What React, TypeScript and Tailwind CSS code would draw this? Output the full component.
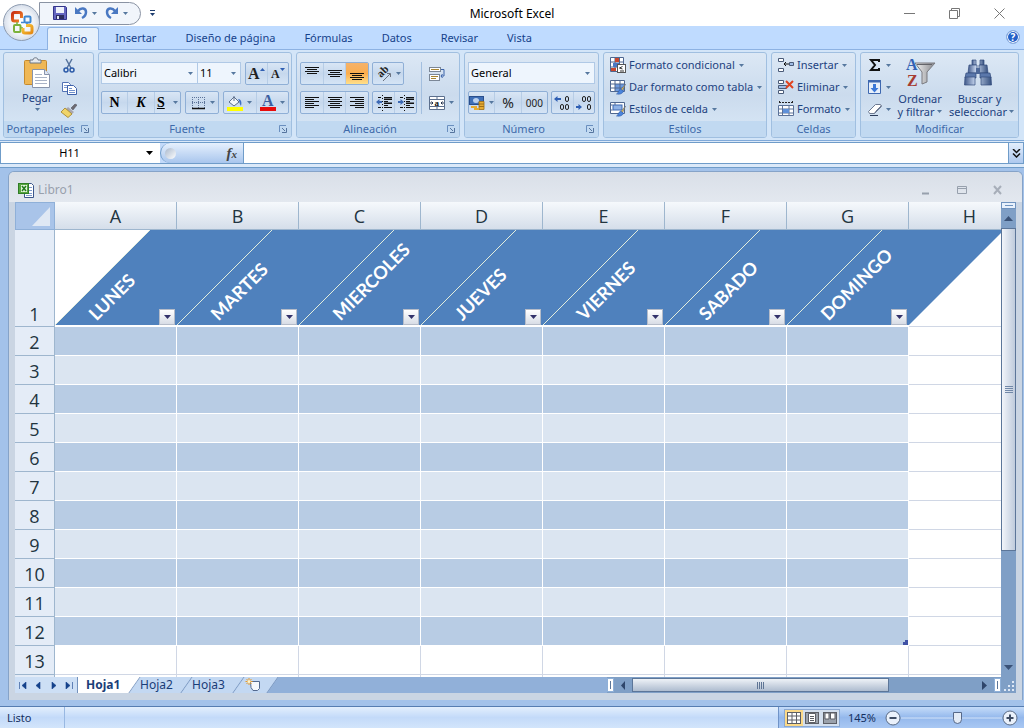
import React, { useState } from 'react';
import clsx from 'clsx';

const DAYS = ['LUNES', 'MARTES', 'MIERCOLES', 'JUEVES', 'VIERNES', 'SABADO', 'DOMINGO'];
const COLUMNS = ['A', 'B', 'C', 'D', 'E', 'F', 'G', 'H'];
const ROWS = [2, 3, 4, 5, 6, 7, 8, 9, 10, 11, 12, 13];
const TABS = ['Inicio', 'Insertar', 'Diseño de página', 'Fórmulas', 'Datos', 'Revisar', 'Vista'];

const Caret = ({ className = 'text-[#56789f]' }: { className?: string }) => (
  <svg className={clsx('shrink-0', className)} width="5" height="3" viewBox="0 0 5 3" fill="currentColor" aria-hidden>
    <path d="M0 0h5L2.500 3z" />
  </svg>
);

interface IconProps {
  children: React.ReactNode;
  size?: number;
}

const Icon = ({ children, size = 16 }: IconProps) => (
  <svg className="shrink-0" width={size} height={size} viewBox={`0 0 ${size} ${size}`} fill="none" aria-hidden>
    {children}
  </svg>
);

/* ---------- icons ---------- */

const OfficeLogo = () => (
  <svg width="24" height="26" viewBox="0 0 24 26" fill="none" aria-hidden>
    <defs>
      <linearGradient id="red" x2="1" y2="1">
        <stop stopColor="#c92f12" />
        <stop offset="1" stopColor="#f28a2b" />
      </linearGradient>
      <linearGradient id="gold" x2="1" y2="1">
        <stop stopColor="#f7c93c" />
        <stop offset="1" stopColor="#e58a13" />
      </linearGradient>
    </defs>
    <path d="M9 11H4.500Q2.500 11 2.500 9V4.500Q2.500 2.500 4.500 2.500H9.500Q11.500 2.500 11.500 4.500V8" stroke="url(#red)" strokeWidth="3" />
    <rect x="14.500" y="6.500" width="6" height="6" rx="1" stroke="#3f87d0" strokeWidth="2" />
    <path d="M11 12.500h3M17 13v3" stroke="#3f87d0" strokeWidth="1.500" />
    <rect x="4" y="15" width="6.500" height="7" rx="1" stroke="#7bb23c" strokeWidth="2" />
    <path d="M7 12v3M10 18h3" stroke="#7bb23c" strokeWidth="1.500" />
    <path d="M16 15.500h4q2 0 2 2V21q0 2-2 2h-5q-2 0-2-2v-3" stroke="url(#gold)" strokeWidth="3" />
  </svg>
);

const SaveIcon = () => (
  <Icon>
    <path d="M1.500 1.500h12l1 1v12h-13z" fill="#6465c0" stroke="#34358a" />
    <rect x="4" y="2" width="8" height="6" fill="#eef1fb" />
    <rect x="4" y="10" width="8" height="4" fill="#2c2c5e" />
    <rect x="5" y="11" width="2" height="3" fill="#dfe3f3" />
  </Icon>
);

const UndoIcon = ({ flip = false }: { flip?: boolean }) => (
  <svg width="14" height="14" viewBox="0 0 14 14" fill="none" className={clsx(flip && '-scale-x-100')} aria-hidden>
    <path d="M4 5c3-4 8-3 8 1 0 3-2 5-4 6" stroke="#4a78c2" strokeWidth="2.500" />
    <path d="M1 1v7h7z" fill="#4a78c2" />
  </svg>
);

const PasteIcon = () => (
  <svg width="28" height="32" viewBox="0 0 28 32" fill="none" aria-hidden>
    <rect x="1.500" y="3.500" width="22" height="24" rx="1" fill="#efb755" stroke="#c58a2e" />
    <path d="M7 6V3h3c0-3 5-3 5 0h3v3z" fill="#e6e9ee" stroke="#6c7785" />
    <path d="M9.500 12.500h12l5 5v13h-17z" fill="#fff" stroke="#8793ab" />
    <path d="M21.500 12.500v5h5" fill="#dfe6f2" stroke="#8793ab" />
    <path d="M12 17.500h7M12 20.500h12M12 23.500h12M12 26.500h12" stroke="#a9b3c6" />
  </svg>
);

const CutIcon = () => (
  <Icon>
    <path d="M5 1l5 9M11 1L6 10" stroke="#56739d" strokeWidth="1.500" />
    <circle cx="5" cy="12" r="2" stroke="#2b5aa8" strokeWidth="1.500" />
    <circle cx="11" cy="12" r="2" stroke="#2b5aa8" strokeWidth="1.500" />
  </Icon>
);

const CopyIcon = () => (
  <Icon>
    <path d="M1.500 2.500h6l2 2v7h-8z" fill="#fff" stroke="#5272b4" />
    <path d="M3 5.500h4M3 7.500h4" stroke="#7f9bd0" />
    <path d="M6.500 5.500h6l3 3v6h-9z" fill="#fff" stroke="#3f62ab" />
    <path d="M8 8.500h3M8 10.500h6M8 12.500h6" stroke="#6f8fcb" />
  </Icon>
);

const BrushIcon = () => (
  <Icon>
    <path d="M10 6l4-4 2 1-4 5z" fill="#6d6a72" stroke="#4b4850" strokeWidth=".5" />
    <path d="M7 5l6 5-2 2-6-5z" fill="#a9a7b0" />
    <path d="M4 6l7 6-4 3.500L0 10z" fill="#f0d469" stroke="#a07f25" strokeWidth=".8" />
  </Icon>
);

const BorderIcon = () => (
  <Icon>
    <path d="M2.500 2v11M8.500 2v11M14.500 2v11M2 2.500h13M2 7.500h13" stroke="#5c7398" strokeDasharray="1 1" />
    <path d="M2 13.500h13" stroke="#111" strokeWidth="1.500" />
  </Icon>
);

const FillIcon = () => (
  <Icon>
    <path d="M2 7l5-5 5 5-5 4z" fill="#f3f7fd" stroke="#5d6f8c" />
    <path d="M7 6V1" stroke="#5d6f8c" />
    <path d="M11 4c3 0 4 3 3 7-2-2-1-5-3-7z" fill="#3d6fc4" />
    <rect y="12" width="16" height="4" fill="#ffff00" />
  </Icon>
);

const LINE_SETS = {
  top: 'M1 1.500h14M3 3.500h10M1 5.500h14M3 7.500h10',
  middle: 'M1 4.500h14M3 6.500h10M1 8.500h14M3 10.500h10',
  bottom: 'M1 7.500h14M3 9.500h10M1 11.500h14M3 13.500h10',
  left: 'M1 2.500h14M1 4.500h9M1 6.500h14M1 8.500h9M1 10.500h14M1 12.500h9',
  center: 'M1 2.500h14M3 4.500h10M1 6.500h14M3 8.500h10M1 10.500h14M3 12.500h10',
  right: 'M1 2.500h14M6 4.500h9M1 6.500h14M6 8.500h9M1 10.500h14M6 12.500h9',
};

const LinesIcon = ({ kind }: { kind: keyof typeof LINE_SETS }) => (
  <Icon>
    <path d={LINE_SETS[kind]} stroke="#111" />
  </Icon>
);

const IndentIcon = ({ out = false }: { out?: boolean }) => (
  <Icon>
    <path d="M2 2.500h3M8 2.500h8M8 4.500h8M8 6.500h4M8 8.500h8M8 10.500h4M2 12.500h3M8 12.500h8" stroke="#111" />
    <path d="M8 4h8M8 8h8" stroke="#111" />
    <path d="M6.500 0v16" stroke="#111" strokeDasharray="1 2" />
    <path d={out ? 'M0 7l3.500-3v2H6v2H3.500v2z' : 'M6 7L2.500 4v2H0v2h2.500v2z'} fill="#3c69b5" />
  </Icon>
);

const OrientationIcon = () => (
  <Icon>
    <text transform="translate(5 12) rotate(-45)" fontFamily="Liberation Serif, serif" fontWeight="700" fontSize="11" fill="#222">ab</text>
    <path d="M7 15l7-7M11 7.500h3.500V11" stroke="#6b7280" />
  </Icon>
);

const WrapIcon = () => (
  <Icon>
    <rect x="0.500" y="1.500" width="11" height="4" fill="#fff" stroke="#7b8797" />
    <path d="M2 3.500h8" stroke="#a88632" />
    <rect x="0.500" y="8.500" width="10" height="6" fill="#fff" stroke="#7b8797" />
    <path d="M2 10.500h7M2 12.500h5" stroke="#a88632" />
    <path d="M12 3.500h3V10h-3m1.500-2L12 10l1.500 2" stroke="#3b62a8" />
  </Icon>
);

const MergeIcon = () => (
  <Icon>
    <path d="M.5 1.500h15v13H.5zM.5 4.500h15M.5 11.500h15M8 1.500v3M8 11.500v3" fill="#fff" stroke="#5b6f8d" />
    <path d="M1 8h3M2.500 6.500L4 8 2.500 9.500M15 8h-3M13.500 6.500L12 8l1.500 1.500" stroke="#24334d" />
    <text x="5.500" y="10.500" fontFamily="Liberation Serif, serif" fontWeight="700" fontSize="9" fill="#111">a</text>
  </Icon>
);

const MoneyIcon = () => (
  <Icon>
    <rect x=".5" y="1.500" width="14" height="8" fill="#3f6fb7" stroke="#2a4f8d" />
    <ellipse cx="7" cy="5.500" rx="3" ry="2.500" fill="#b9d0ef" />
    <path d="M10 6.500h5v8h-5z" fill="#e7ac34" stroke="#a06f14" strokeWidth=".8" />
    <path d="M10 9h5M10 11.500h5" stroke="#a06f14" />
    <path d="M2 12h6M5 14h5" stroke="#e7ac34" strokeWidth="2" />
  </Icon>
);

const DecimalIcon = ({ more = false }: { more?: boolean }) => (
  <Icon>
    {more ? <path d="M0 4l3.500-3v2H7v2H3.500v2z" fill="#2f5fb3" /> : <path d="M6 12L2.500 9v2H0v2h2.500v2z" fill="#2f5fb3" />}
    <rect x="11.500" y="1.500" width="3" height="5" rx="1.500" stroke="#222" />
    <rect x="11.500" y="9.500" width="3" height="5" rx="1.500" stroke="#222" />
    {more ? <rect x="6.500" y="9.500" width="3" height="5" rx="1.500" stroke="#222" /> : <rect x="6.500" y="1.500" width="3" height="5" rx="1.500" stroke="#222" />}
  </Icon>
);

const ConditionalIcon = () => (
  <Icon>
    <path d="M.5.5h13v14H.5zM.5 5h13M.5 10h13M5 .5v14M9.500.5v14" fill="#fff" stroke="#4f6790" />
    <rect x="5" y="1" width="4" height="4" fill="#c8472f" />
    <rect x="3" y="6" width="6" height="4" fill="#4b78c4" />
    <rect x="1" y="11" width="5" height="3" fill="#c8472f" />
    <rect x="7.500" y="7.500" width="8" height="8" fill="#fff" stroke="#555" />
    <path d="M12.500 9.500l-3 1.500 3 1M10 14h4" stroke="#333" />
  </Icon>
);

const TableStyleIcon = ({ cell = false }: { cell?: boolean }) => (
  <Icon>
    <path d="M.5 1.500h14v11H.5z" fill="#fff" stroke="#4f6790" />
    {cell ? <rect x="3" y="4" width="9" height="5" fill="#8fb2e6" stroke="#3e68b0" /> : <path d="M5 5h9v7H5z" fill="#6e9ade" />}
    <path d={cell ? 'M.5 4h2M.5 9h2M5 1.500V4' : 'M.5 5h14M.5 9h14M5 1.500v11M10 1.500v11'} stroke="#4f6790" />
    <path d="M15.500 5l-5 6 2 1z" fill="#e9bd4a" stroke="#5e6a80" strokeWidth=".6" />
    <path d="M10.500 10l3 2c-1 3-4 3.500-7 3 2-1 2-4 4-5z" fill="#4b84dc" stroke="#2d5ba8" strokeWidth=".6" />
  </Icon>
);

const CellsIcon = ({ remove = false }: { remove?: boolean }) => (
  <Icon>
    <path d="M.5 1.500h5v3h-5zM.5 11.500h5v3h-5z" fill="#fff" stroke="#4a5b78" />
    {remove ? (
      <>
        <path d="M.5 6.500h8v3h-8z" fill="#9fbce6" stroke="#4a5b78" />
        <path d="M8 2l7 7M15 2L8 9" stroke="#e0431f" strokeWidth="2" />
      </>
    ) : (
      <>
        <path d="M11.500 5.500h4v3h-4z" fill="#9fbce6" stroke="#4a5b78" />
        <path d="M6 7h5M8 5L6 7l2 2" stroke="#111" />
      </>
    )}
  </Icon>
);

const FormatIcon = () => (
  <Icon>
    <path d="M1 1.500h13M1.500 0v3M14.500 0v3" stroke="#222" strokeDasharray="2 1" />
    <path d="M.5 4.500h15v10H.5zM.5 8h15M.5 12h15M4.500 4.500v10M11 4.500v10" fill="#fff" stroke="#5b7299" />
    <rect x="5" y="8" width="6" height="4" fill="#5f91da" />
  </Icon>
);

const FillDownIcon = () => (
  <Icon>
    <path d="M1.500 1.500h12v13h-12z" fill="#e8f0fb" stroke="#3e68b0" />
    <path d="M1 1h13v2.500H1z" fill="#3e68b0" />
    <path d="M6 5h3v4h2.500l-4 4.500-4-4.500H6z" fill="#3b78d8" />
  </Icon>
);

const EraserIcon = () => (
  <Icon>
    <path d="M1.500 10.500l7-7h5l1 2-7 7h-5z" fill="#fff" stroke="#6d7a92" />
    <path d="M7.500 12.500l1-2 6-6" stroke="#6d7a92" />
    <path d="M3 14.500h8" stroke="#2c3d5c" />
  </Icon>
);

const SortFilterIcon = () => (
  <svg width="32" height="30" viewBox="0 0 32 30" fill="none" aria-hidden>
    <text x="2" y="13" fontFamily="Liberation Serif, serif" fontSize="16" fontWeight="700" fill="#3262b4">A</text>
    <text x="3" y="29" fontFamily="Liberation Serif, serif" fontSize="16" fontWeight="700" fill="#a63c32">Z</text>
    <path d="M11 6h20l-8 9v10l-5 2V15z" fill="url(#funnel)" stroke="#7a7b80" />
    <path d="M13 7.500h15" stroke="#636469" />
    <defs>
      <linearGradient id="funnel">
        <stop stopColor="#f3f3f3" />
        <stop offset="1" stopColor="#86878c" />
      </linearGradient>
    </defs>
  </svg>
);

const BinocularsIcon = () => (
  <svg width="30" height="28" viewBox="0 0 30 28" fill="none" aria-hidden>
    <defs>
      <linearGradient id="tube">
        <stop stopColor="#40598a" />
        <stop offset=".4" stopColor="#c7d6ee" />
        <stop offset="1" stopColor="#35507f" />
      </linearGradient>
    </defs>
    <path d="M9 1h4v5H9zM17 1h4v5h-4z" fill="url(#tube)" stroke="#324b7c" strokeWidth=".7" />
    <path d="M6 6h8v8H5zM16 6h8l1 8h-9z" fill="url(#tube)" stroke="#324b7c" strokeWidth=".7" />
    <path d="M3 14h10v5H2zM17 14h10l1 5H17z" fill="#5b78ab" stroke="#324b7c" strokeWidth=".7" />
    <path d="M2 18h10v8H1.500zM18 18h10l.5 8H18z" fill="url(#tube)" stroke="#324b7c" strokeWidth=".7" />
    <path d="M13 9h4v6h-4z" fill="#4d6898" />
  </svg>
);

const WorkbookIcon = () => (
  <Icon>
    <path d="M6.500 1.500h7l2 2v12h-9z" fill="#fff" stroke="#3c578c" />
    <path d="M10 5.500h4M10 8.500h4M10 11.500h4M8 13.500h6" stroke="#7e9bcd" />
    <rect x=".5" y="1.500" width="10" height="10" fill="#57a63f" stroke="#2f7d26" />
    <path d="M3 3h6v7H3z" fill="#e3f4dc" />
    <path d="M4 4l4 5M8 4L4 9" stroke="#237a1d" strokeWidth="1.500" />
  </Icon>
);

const NewSheetIcon = () => (
  <Icon>
    <path d="M5.500 4.500h9v7l-2 2H8l-2-3z" fill="#f5f8fd" stroke="#53698f" />
    <path d="M4 1v7M.5 4.500h7M1.500 2l5 5M6.500 2l-5 5" stroke="#e79a2a" />
    <circle cx="4" cy="4.500" r="1.500" fill="#fff4c9" />
  </Icon>
);

const ViewIcon = ({ kind }: { kind: string }) => (
  <Icon size={14}>
    <rect x=".5" y="1.500" width="13" height="11" fill={kind === 'normal' ? '#fff' : '#9aa1ab'} stroke="#5c5f66" />
    {kind === 'normal' && <path d="M.5 5h13M.5 9h13M5 1.500v11M9.500 1.500v11" stroke="#5c5f66" />}
    {kind === 'page' && <path d="M3.500 2.500h7v9h-7zM5 5.500h4M5 7.500h4M5 9.500h4" fill="#fff" stroke="#5c5f66" />}
    {kind === 'breaks' && <path d="M2 2h4v6H2zM7.500 2H12v6H7.500z" fill="#fff" stroke="#5c5f66" />}
  </Icon>
);

/* ---------- ribbon pieces ---------- */

interface GroupProps {
  title: string;
  className: string;
  launcher?: boolean;
  children: React.ReactNode;
}

const Group = ({ title, className, launcher = false, children }: GroupProps) => (
  <section
    aria-label={title}
    className={clsx('flex min-h-[86px] flex-col overflow-hidden rounded-[3px] border border-[#a0bfe0] bg-linear-to-b from-[#dce8f5] via-[#cbdbed] to-[#d9e8f7]', className)}
  >
    <div className="flex-1">{children}</div>
    <div className="relative flex h-4 items-center justify-center bg-[#c1d9f1] text-[#3e6aaa]">
      <h2 className={clsx(launcher && 'pr-4')}>{title}</h2>
      {launcher && (
        <button aria-label={`Opciones de ${title}`} className="absolute right-1 top-1">
          <Icon size={8}>
            <path d="M.5 7V.5H7" stroke="#6a8fbf" />
            <path d="M3 3l3 3M7.500 3v4.500H3" stroke="#55749e" />
          </Icon>
        </button>
      )}
    </div>
  </section>
);

const ButtonSet = ({ children, className }: { children: React.ReactNode; className?: string }) => (
  <div className={clsx('flex h-[23px] divide-x divide-[#b7cde6] overflow-hidden rounded-[2px] border border-[#8fafd6] bg-linear-to-b from-[#d9e6f5] via-[#c6d8ed] to-[#d5e4f5]', className)}>
    {children}
  </div>
);

interface ToolProps {
  label: string;
  children: React.ReactNode;
  caret?: boolean;
  active?: boolean;
}

const Tool = ({ label, children, caret = false, active = false }: ToolProps) => (
  <button
    aria-label={label}
    className={clsx('flex flex-1 items-center justify-center gap-1', active && 'bg-linear-to-b from-[#f5b26a] via-[#fbad4c] to-[#ffe08a]')}
  >
    {children}
    {caret && <Caret />}
  </button>
);

interface PickerProps {
  label: string;
  value: string;
  className: string;
}

const Picker = ({ label, value, className }: PickerProps) => (
  <div className={clsx('relative flex h-[22px] items-center border border-[#b0c9e6] bg-[#eef5fd] text-black', className)}>
    <select aria-label={label} className="w-full appearance-none bg-transparent pl-[2px] outline-none" defaultValue={value}>
      <option>{value}</option>
    </select>
    <Caret className="pointer-events-none absolute right-1 text-[#56789f]" />
  </div>
);

const RowButton = ({ icon, children }: { icon: React.ReactNode; children: React.ReactNode }) => (
  <button className="flex h-[22px] items-center gap-[3px] whitespace-nowrap text-[#1d4280]">
    {icon}
    <span className="pr-px">{children}</span>
    <Caret />
  </button>
);

const Ribbon = () => (
  <div className="flex gap-1 border-b border-[#7fa9d9] bg-[#d3e5f8] px-[3px] py-[2px]">
    <Group title="Portapapeles" className="w-[91px]" launcher>
      <div className="flex justify-between pt-1 pr-4 pl-[18px]">
        <button className="flex flex-col items-center text-[#1d4280]">
          <PasteIcon />
          <span className="pt-px">Pegar</span>
          <span className="pt-[2px]"><Caret /></span>
        </button>
        <div className="flex flex-col gap-[6px] pt-px">
          <button aria-label="Cortar"><CutIcon /></button>
          <button aria-label="Copiar"><CopyIcon /></button>
          <button aria-label="Copiar formato"><BrushIcon /></button>
        </div>
      </div>
    </Group>

    <Group title="Fuente" className="w-[194px]" launcher>
      <div className="flex flex-col gap-[6px] px-[2px] pt-[9px]">
        <div className="flex">
          <Picker label="Fuente" value="Calibri" className="w-[97px]" />
          <Picker label="Tamaño de fuente" value="11" className="w-[43px] border-l-0" />
          <ButtonSet className="ml-1 flex-1">
            <Tool label="Aumentar tamaño">
              <span className="flex items-start font-['Liberation_Serif',serif] text-base leading-5 font-bold text-[#222]">
                A<Caret className="mt-1 rotate-180 text-[#2f5fb3]" />
              </span>
            </Tool>
            <Tool label="Disminuir tamaño">
              <span className="flex items-start font-['Liberation_Serif',serif] text-xs leading-5 font-bold text-[#222]">
                A<Caret className="mt-1 text-[#2f5fb3]" />
              </span>
            </Tool>
          </ButtonSet>
        </div>
        <div className="flex gap-1">
          <ButtonSet className="w-[80px] font-['Liberation_Serif',serif] text-sm font-bold text-black">
            <Tool label="Negrita">N</Tool>
            <Tool label="Cursiva"><i>K</i></Tool>
            <Tool label="Subrayado" caret><span className="pr-1 underline">S</span></Tool>
          </ButtonSet>
          <ButtonSet className="w-[34px]">
            <Tool label="Bordes" caret><BorderIcon /></Tool>
          </ButtonSet>
          <ButtonSet className="flex-1">
            <Tool label="Color de relleno" caret><FillIcon /></Tool>
            <Tool label="Color de fuente" caret>
              <span className="h-4 w-4 border-b-4 border-[#e80c0c] font-['Liberation_Serif',serif] text-base leading-3 font-bold text-[#3c5f9f]">A</span>
            </Tool>
          </ButtonSet>
        </div>
      </div>
    </Group>

    <Group title="Alineación" className="w-[164px]" launcher>
      <div className="flex px-[3px] pt-[9px]">
        <div className="flex flex-col gap-[6px] border-r border-[#a3bfdf] pr-1">
          <div className="flex gap-[3px]">
            <ButtonSet className="w-[69px]">
              <Tool label="Alinear arriba"><LinesIcon kind="top" /></Tool>
              <Tool label="Alinear al medio"><LinesIcon kind="middle" /></Tool>
              <Tool label="Alinear abajo" active><LinesIcon kind="bottom" /></Tool>
            </ButtonSet>
            <ButtonSet className="w-[32px]">
              <Tool label="Orientación" caret><OrientationIcon /></Tool>
            </ButtonSet>
          </div>
          <div className="flex gap-[3px]">
            <ButtonSet className="w-[69px]">
              <Tool label="Alinear a la izquierda"><LinesIcon kind="left" /></Tool>
              <Tool label="Centrar"><LinesIcon kind="center" /></Tool>
              <Tool label="Alinear a la derecha"><LinesIcon kind="right" /></Tool>
            </ButtonSet>
            <ButtonSet className="w-[45px]">
              <Tool label="Disminuir sangría"><IndentIcon out /></Tool>
              <Tool label="Aumentar sangría"><IndentIcon /></Tool>
            </ButtonSet>
          </div>
        </div>
        <div className="flex flex-col items-start gap-[6px] pl-[7px]">
          <button aria-label="Ajustar texto" className="flex h-[23px] items-center"><WrapIcon /></button>
          <button aria-label="Combinar y centrar" className="flex h-[23px] items-center gap-1"><MergeIcon /><Caret /></button>
        </div>
      </div>
    </Group>

    <Group title="Número" className="w-[135px]" launcher>
      <div className="flex flex-col gap-[7px] px-[3px] pt-[9px]">
        <Picker label="Formato de número" value="General" className="w-full" />
        <div className="flex gap-[3px] text-[#222]">
          <ButtonSet className="w-[80px]">
            <Tool label="Formato de contabilidad" caret><MoneyIcon /></Tool>
            <Tool label="Estilo porcentual"><span className="text-sm">%</span></Tool>
            <Tool label="Estilo millares"><span className="text-[10px]">000</span></Tool>
          </ButtonSet>
          <ButtonSet className="flex-1">
            <Tool label="Aumentar decimales"><DecimalIcon more /></Tool>
            <Tool label="Disminuir decimales"><DecimalIcon /></Tool>
          </ButtonSet>
        </div>
      </div>
    </Group>

    <Group title="Estilos" className="w-[164px]">
      <div className="flex flex-col items-start pt-px pl-[6px]">
        <RowButton icon={<ConditionalIcon />}>Formato condicional</RowButton>
        <RowButton icon={<TableStyleIcon />}>Dar formato como tabla</RowButton>
        <RowButton icon={<TableStyleIcon cell />}>Estilos de celda</RowButton>
      </div>
    </Group>

    <Group title="Celdas" className="w-[85px]">
      <div className="flex flex-col items-start pt-px pl-[6px]">
        <RowButton icon={<CellsIcon />}>Insertar</RowButton>
        <RowButton icon={<CellsIcon remove />}>Eliminar</RowButton>
        <RowButton icon={<FormatIcon />}>Formato</RowButton>
      </div>
    </Group>

    <Group title="Modificar" className="w-[159px]">
      <div className="flex pt-px pl-[6px] text-[#1d4280]">
        <div className="flex w-7 flex-col">
          <button aria-label="Suma" className="flex h-[22px] items-center gap-[3px]">
            <Icon><path d="M12 5V3H4l4 5-4 5h8v-2" stroke="#111" strokeWidth="2" /></Icon>
            <Caret />
          </button>
          <button aria-label="Rellenar" className="flex h-[22px] items-center gap-[3px]"><FillDownIcon /><Caret /></button>
          <button aria-label="Borrar" className="flex h-[22px] items-center gap-[3px]"><EraserIcon /><Caret /></button>
        </div>
        <button className="flex w-[50px] flex-col items-center pt-[3px] leading-[13px] whitespace-nowrap">
          <span className="h-[35px]"><SortFilterIcon /></span>
          <span>Ordenar</span>
          <span className="flex items-center gap-[3px]">y filtrar <Caret /></span>
        </button>
        <button className="flex flex-1 flex-col items-center pt-[3px] leading-[13px] whitespace-nowrap">
          <span className="h-[35px] pt-[2px] pr-2"><BinocularsIcon /></span>
          <span className="pr-1">Buscar y</span>
          <span className="flex items-center gap-[2px]">seleccionar <Caret /></span>
        </button>
      </div>
    </Group>
  </div>
);

/* ---------- window pieces ---------- */

const TitleBar = () => (
  <header className="grid h-[26px] grid-cols-[1fr_auto_1fr] items-center bg-white">
    <div className="flex items-center pl-[39px]">
      <div className="flex h-[23px] w-[102px] items-center rounded-r-full border border-[#8a93a3] bg-[#f1f5fb] pl-3">
        <div className="flex flex-1 items-center">
          <button aria-label="Guardar"><SaveIcon /></button>
          <button aria-label="Deshacer" className="flex items-center gap-1 pl-[6px]"><UndoIcon /><Caret /></button>
          <button aria-label="Rehacer" className="flex items-center gap-1 pl-2"><UndoIcon flip /><Caret /></button>
        </div>
      </div>
      <button aria-label="Personalizar barra" className="flex flex-col items-center gap-[2px] pl-[9px]">
        <span className="h-px w-[5px] bg-[#1d3c6e]" />
        <Caret className="text-[#1d3c6e]" />
      </button>
    </div>
    <h1 className="pt-px text-xs text-black">Microsoft Excel</h1>
    <div className="flex justify-end gap-[34px] pr-[19px] text-[#777]">
      <button aria-label="Minimizar"><Icon size={11}><path d="M0 5.500h11" stroke="currentColor" /></Icon></button>
      <button aria-label="Restaurar"><Icon size={11}><path d="M.5 2.500h8v8h-8zM2.500 2.500v-2h8v8h-2" stroke="currentColor" /></Icon></button>
      <button aria-label="Cerrar"><Icon size={11}><path d="M.5.5l10 10M10.500.5l-10 10" stroke="currentColor" /></Icon></button>
    </div>
  </header>
);

const TabStrip = () => (
  <nav className="flex h-6 items-end border-b border-[#8db2e3] bg-[#bfdbff] pl-[47px] text-[#15428b]">
    {TABS.map((tab, i) => (
      <button
        key={tab}
        className={clsx(
          'mr-[3px] h-[23px] whitespace-nowrap',
          i === 0 ? '-mb-px rounded-t-[3px] border border-b-0 border-[#8db2e3] bg-[#e6f0fb] px-[11px]' : 'px-[13px]',
        )}
      >
        {tab}
      </button>
    ))}
    <button aria-label="Ayuda" className="mr-1 mb-[5px] ml-auto flex h-[14px] w-[14px] items-center justify-center rounded-full border border-[#8fb0e0] bg-[#2461c9] text-[10px] font-bold text-white ring-1 ring-white ring-inset">
      ?
    </button>
  </nav>
);

const FormulaBar = () => (
  <div className="border-b border-[#6f9cc9] pt-px pb-[3px]">
    <div className="flex h-[22px] border-y border-[#6f9cc9] bg-[#c3dafa] text-black">
      <div className="flex w-[160px] items-center border-l border-[#6f9cc9] bg-white pr-[7px]">
        <input aria-label="Cuadro de nombres" className="w-full min-w-0 bg-transparent pr-2 text-center outline-none" defaultValue="H11" />
        <svg width="7" height="4" viewBox="0 0 7 4" className="shrink-0" aria-hidden><path d="M0 0h7L3.500 4z" /></svg>
      </div>
      <div className="flex w-[84px] items-center justify-between rounded-l-full border-x border-[#6f9cc9] bg-linear-to-b from-[#e6f0fd] to-[#a9c6ed] pr-[6px]">
        <span className="ml-1 h-[11px] w-[11px] rounded-full bg-linear-to-br from-[#a9b8cc] to-white" />
        <button aria-label="Insertar función" className="font-['Liberation_Serif',serif] text-[15px] font-bold text-[#444] italic">
          f<span className="text-[11px]">x</span>
        </button>
      </div>
      <input aria-label="Barra de fórmulas" className="min-w-0 flex-1 bg-white px-1 outline-none" />
      <button aria-label="Expandir barra de fórmulas" className="flex w-4 items-center justify-center border-x border-[#6f9cc9] bg-linear-to-b from-[#e3eefc] to-[#adc8ee]">
        <Icon size={9}><path d="M1 0l3.500 3.500L8 0M1 4.500L4.500 8 8 4.500" stroke="#111" strokeWidth="1.500" /></Icon>
      </button>
    </div>
  </div>
);

const DayHeader = ({ day }: { day: string }) => (
  <th scope="col" className="relative border-b-2 border-white p-0">
    <svg className="absolute top-0 left-0 overflow-visible" width="122" height="95" viewBox="0 0 122 95" aria-hidden>
      <path d="M0 95L95 0h122l-95 95z" fill="#4f81bd" />
      <path d="M0 95L95 0" stroke="#e3eedd" />
    </svg>
    <span className="absolute bottom-[2px] left-[43px] z-10 origin-bottom-left -rotate-45 font-['Lato',sans-serif] text-lg leading-none font-bold text-white">
      {day}
    </span>
    <button aria-label={`Filtrar ${day}`} className="absolute right-[2px] bottom-0 z-10 flex h-4 w-4 items-center justify-center border border-[#b5bcc9] bg-linear-to-b from-white to-[#d8dde6]">
      <svg width="7" height="4" viewBox="0 0 7 4" fill="#33336b" aria-hidden><path d="M0 0h7L3.500 4z" /></svg>
    </button>
  </th>
);

const rowHead = 'border-r border-b border-[#9eb6ce] bg-[#e4ecf7] p-0 pt-[2px] font-normal';

const Sheet = () => (
  <div className="min-h-0 min-w-0 flex-1 overflow-hidden bg-white">
    <table className="w-[1016px] table-fixed border-separate border-spacing-0 font-['Open_Sans','Noto_Sans',sans-serif] text-lg leading-6 text-[#22343f]">
      <colgroup>
        <col className="w-10" />
        {COLUMNS.map((c) => <col key={c} className="w-[122px]" />)}
      </colgroup>
      <thead>
        <tr className="h-7">
          <th className="border border-[#8fb0d8] bg-[#a9c4e9] p-0">
            <svg className="mt-px mr-1 ml-auto" width="18" height="19" viewBox="0 0 18 19" aria-hidden><path d="M18 0v19H0z" fill="#dfe8f4" /></svg>
          </th>
          {COLUMNS.map((c) => (
            <th key={c} scope="col" className="border-r border-b border-[#9eb6ce] bg-linear-to-b from-[#f6f9fc] to-[#d5deea] p-0 font-normal">
              {c}
            </th>
          ))}
        </tr>
      </thead>
      <tbody>
        <tr className="h-[97px]">
          <th scope="row" className={clsx(rowHead, 'align-bottom')}>1</th>
          {DAYS.map((day) => <DayHeader key={day} day={day} />)}
          <td className="border-b border-[#d0d7e5]" />
        </tr>
        {ROWS.map((row) => (
          <tr key={row} className="h-[29px]">
            <th scope="row" className={rowHead}>{row}</th>
            {DAYS.map((day, i) => (
              <td
                key={day}
                className={clsx(
                  'relative border-r border-b p-0',
                  row === 13 ? 'border-[#d0d7e5]' : 'border-white',
                  row < 13 && (row % 2 ? 'bg-[#dbe5f1]' : 'bg-[#b8cce4]'),
                )}
              >
                {row === 12 && i === 6 && <span className="absolute right-0 bottom-0 h-[5px] w-[5px] border-r-3 border-b-3 border-[#3f51a5]" />}
              </td>
            ))}
            <td className="border-b border-[#d0d7e5]" />
          </tr>
        ))}
        <tr className="h-[29px]">
          <th scope="row" className={rowHead} />
          {COLUMNS.map((c) => <td key={c} className="border-r border-[#d0d7e5]" />)}
        </tr>
      </tbody>
    </table>
  </div>
);

const VerticalScroll = () => (
  <div className="flex w-[15px] flex-col items-center bg-[#7f9fc6] text-[#3a5277]">
    <span className="flex h-[7px] w-full items-center justify-center border border-[#6f93bf] bg-[#e8f1fc]">
      <span className="h-px w-2 bg-[#6f93bf]" />
    </span>
    <button aria-label="Subir" className="flex h-[19px] items-center">
      <svg width="9" height="5" viewBox="0 0 9 5" fill="currentColor" aria-hidden><path d="M0 5h9L4.500 0z" /></svg>
    </button>
    <div className="flex w-full flex-1 flex-col">
      <div className="flex h-3/4 w-full flex-col items-center justify-center gap-px border border-[#5c7699] bg-linear-to-r from-[#f2f5fa] to-[#bfcbdc]">
        {[0, 1, 2, 3].map((n) => <span key={n} className="h-px w-2 bg-[#7188a8]" />)}
      </div>
    </div>
    <button aria-label="Bajar" className="flex h-[19px] items-center">
      <svg width="9" height="5" viewBox="0 0 9 5" fill="currentColor" aria-hidden><path d="M0 0h9L4.500 5z" /></svg>
    </button>
  </div>
);

const NAV_ARROWS = [
  { label: 'Primera hoja', d: 'M1.500 0v7M8 0v7L4 3.500z' },
  { label: 'Hoja anterior', d: 'M6 0v7L2 3.500z' },
  { label: 'Hoja siguiente', d: 'M3 0v7l4-3.500z' },
  { label: 'Última hoja', d: 'M7.500 0v7M1 0v7l4-3.500z' },
];

const slant = 'before:absolute before:inset-y-0 before:right-[-3px] before:-z-10 before:-skew-x-[35deg] before:border-r before:border-[#7593bd]';

const SheetTabs = () => {
  const [sheet, setSheet] = useState('Hoja1');
  return (
    <div className="flex h-4 text-[#1a3d78]">
      <div className="flex min-w-0 flex-1 bg-[#91b0d9]">
        <div className="z-10 flex w-[63px] items-center justify-around border-r border-[#7593bd] bg-[#cddff5]">
          {NAV_ARROWS.map(({ label, d }) => (
            <button key={label} aria-label={label}>
              <svg width="9" height="7" viewBox="0 0 9 7" fill="#15428b" aria-hidden><path d={d} stroke="#15428b" strokeWidth=".6" /></svg>
            </button>
          ))}
        </div>
        <div className="relative isolate flex text-xs leading-4">
          {['Hoja1', 'Hoja2', 'Hoja3'].map((name, i) => (
            <button
              key={name}
              onClick={() => setSheet(name)}
              className={clsx(
                'relative pl-2 text-left',
                slant,
                i === 0 ? 'w-[54px] before:-left-2' : 'w-[52px] before:left-[3px]',
                sheet === name ? 'font-bold before:bg-white' : 'before:bg-[#c3d8f2]',
              )}
            >
              {name}
            </button>
          ))}
          <button aria-label="Insertar hoja de cálculo" className={clsx('relative flex w-[34px] justify-center before:left-[3px] before:bg-[#c3d8f2]', slant)}>
            <NewSheetIcon />
          </button>
        </div>
      </div>
      <div className="flex w-[394px] items-center bg-[#7f9fc6]">
        <span className="flex h-[14px] w-[7px] items-center justify-center border border-[#8fb0d8] bg-white"><span className="h-2 w-px bg-[#5c7699]" /></span>
        <button aria-label="Izquierda" className="px-[7px]">
          <svg width="4" height="9" viewBox="0 0 4 9" fill="#2f466b" aria-hidden><path d="M4 0v9L0 4.500z" /></svg>
        </button>
        <div className="flex flex-1">
          <div className="flex h-[14px] w-3/4 items-center justify-center gap-px border border-[#5c7699] bg-linear-to-b from-[#eef2f7] to-[#aebccf]">
            {[0, 1, 2, 3].map((n) => <span key={n} className="h-[7px] w-px bg-[#5f7595]" />)}
          </div>
        </div>
        <button aria-label="Derecha" className="px-[7px]">
          <svg width="5" height="9" viewBox="0 0 5 9" fill="#2f466b" aria-hidden><path d="M0 0v9l5-4.500z" /></svg>
        </button>
        <span className="flex h-[14px] w-[7px] items-center justify-center border border-[#8fb0d8] bg-white"><span className="h-2 w-px bg-[#5c7699]" /></span>
      </div>
      <svg className="shrink-0 bg-[#7f9fc6]" width="15" height="16" viewBox="0 0 15 16" fill="#dfe9f6" aria-hidden>
        <path d="M11 4h2v2h-2zM7 8h2v2H7zM11 8h2v2h-2zM3 12h2v2H3zM7 12h2v2H7zM11 12h2v2h-2z" />
      </svg>
    </div>
  );
};

const Workbook = () => (
  <main className="mt-[3px] mr-px mb-[6px] ml-2 flex min-h-0 flex-1 flex-col rounded-t-[6px] border border-b-0 border-[#86a3c8] bg-[#cad5e3] px-[6px] pb-[7px]">
    <div className="-mx-[6px] flex h-[30px] shrink-0 items-center rounded-t-[5px] bg-linear-to-b from-[#d9dfe8] to-[#e3e8ef] pt-[6px] pr-2 pl-[9px] text-[#98a0ac]">
      <WorkbookIcon />
      <h2 className="pl-1 text-xs">Libro1</h2>
      <div className="ml-auto flex gap-[26px] pr-[11px]">
        <button aria-label="Minimizar libro"><Icon size={10}><path d="M1 8.500h7" stroke="#97a0ad" strokeWidth="2" /></Icon></button>
        <button aria-label="Maximizar libro"><Icon size={10}><path d="M.5 1.500h9v7h-9zM.5 3.500h9" stroke="#97a0ad" /></Icon></button>
        <button aria-label="Cerrar libro"><Icon size={10}><path d="M1 1l7 8M8 1L1 9" stroke="#a7aeb9" strokeWidth="2" /></Icon></button>
      </div>
    </div>
    <div className="flex min-h-0 flex-1">
      <Sheet />
      <VerticalScroll />
    </div>
    <SheetTabs />
  </main>
);

const StatusBar = () => (
  <footer className="flex h-[22px] shrink-0 border-t border-[#567db1] bg-linear-to-b from-[#e3effd] via-[#c3daf9] to-[#d3e5fb] text-[#15305f]">
    <p className="flex w-[65px] items-center border-r border-[#98b8e2] pl-[7px]">Listo</p>
    <div className="ml-auto flex items-center border-l border-[#6f93c8] bg-linear-to-b from-[#c5dcf9] via-[#94b8ec] to-[#a9c8f3] pr-[6px] pl-[5px]">
      <div className="flex h-[18px] border border-[#8aa8d2] bg-[#d3dfee]">
        {['normal', 'page', 'breaks'].map((kind) => (
          <button key={kind} aria-label={`Vista ${kind}`} className={clsx('flex w-[18px] items-center justify-center', kind === 'normal' && 'bg-[#fbd988]')}>
            <ViewIcon kind={kind} />
          </button>
        ))}
      </div>
      <output className="w-[44px] text-center">145%</output>
      <button aria-label="Alejar" className="ml-px">
        <Icon><circle cx="8" cy="8" r="7" fill="#eaf1fb" stroke="#5a6b85" /><path d="M4.500 8h7" stroke="#3e4c63" strokeWidth="2" /></Icon>
      </button>
      <input
        aria-label="Zoom"
        type="range"
        min="0"
        max="100"
        defaultValue="57"
        className="h-4 w-[101px] appearance-none bg-linear-to-b from-transparent from-45% via-[#e8f1fd] via-50% to-transparent to-55% [&::-webkit-slider-thumb]:h-3 [&::-webkit-slider-thumb]:w-[9px] [&::-webkit-slider-thumb]:appearance-none [&::-webkit-slider-thumb]:rounded-b-full [&::-webkit-slider-thumb]:border [&::-webkit-slider-thumb]:border-[#56698a] [&::-webkit-slider-thumb]:bg-[#e3ebf6]"
      />
      <button aria-label="Acercar">
        <Icon><circle cx="8" cy="8" r="7" fill="#eaf1fb" stroke="#5a6b85" /><path d="M4.500 8h7M8 4.500v7" stroke="#3e4c63" strokeWidth="2" /></Icon>
      </button>
    </div>
  </footer>
);

const App: React.FC = () => (
  <div className="relative flex h-screen flex-col overflow-hidden bg-[#a3c2ea] font-['Noto_Sans','Open_Sans',sans-serif] text-[11px] leading-4">
    <div className="shrink-0 bg-[#dbe9f9]">
      <TitleBar />
      <TabStrip />
      <Ribbon />
      <FormulaBar />
    </div>
    <Workbook />
    <StatusBar />
    <button aria-label="Botón de Office" className="absolute top-1 left-[3px] flex h-[37px] w-[37px] items-center justify-center rounded-full border border-[#8d9bb0] bg-radial from-white via-[#eef2f8] to-[#b9c5d8]">
      <OfficeLogo />
    </button>
  </div>
);

export default App;
